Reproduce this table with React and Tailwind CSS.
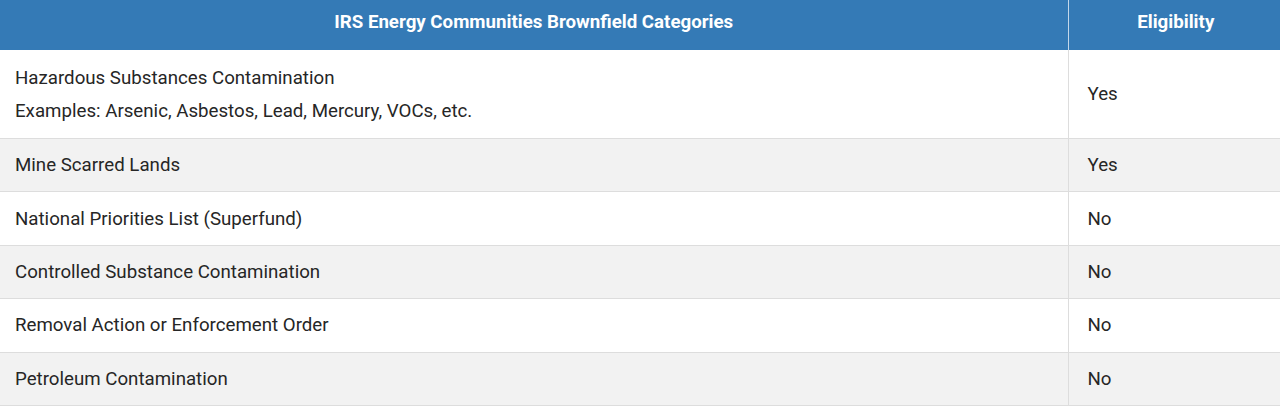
const rows = [
  { name: "Mine Scarred Lands", ok: "Yes" },
  { name: "National Priorities List (Superfund)", ok: "No" },
  { name: "Controlled Substance Contamination", ok: "No" },
  { name: "Removal Action or Enforcement Order", ok: "No" },
  { name: "Petroleum Contamination", ok: "No" },
];

export default function App() {
  return (
    <div className="w-[1280px] h-[406px] overflow-hidden bg-white font-['Roboto',sans-serif] text-[18.7px] text-[#262626]">
      <table className="w-full border-collapse">
        <thead>
          <tr className="bg-[#347ab6] text-white">
            <th className="w-[1068px] h-[50px] pb-[6px] text-center font-bold leading-[26px] border-r border-[#c4d8ea]">
              IRS Energy Communities Brownfield Categories
            </th>
            <th className="h-[50px] pb-[6px] pl-[3px] text-center font-bold leading-[26px]">Eligibility</th>
          </tr>
        </thead>
        <tbody>
          <tr className="bg-white border-b border-[#ddd]">
            <td className="px-[15px] pt-[14.5px] pb-[14.5px] leading-[26px] border-r border-[#ddd]">
              <p>Hazardous Substances Contamination</p>
              <p className="mt-[7px]">Examples: Arsenic, Asbestos, Lead, Mercury, VOCs, etc.</p>
            </td>
            <td className="pl-[19px] leading-[26px]">Yes</td>
          </tr>
          {rows.map((r, i) => (
            <tr
              key={r.name}
              className={(i % 2 === 0 ? "bg-[#f2f2f2]" : "bg-white") + " border-b border-[#ddd]"}
            >
              <td className="px-[15px] py-[13.2px] leading-[26px] border-r border-[#ddd]">{r.name}</td>
              <td className="pl-[19px] leading-[26px]">{r.ok}</td>
            </tr>
          ))}
        </tbody>
      </table>
    </div>
  );
}
